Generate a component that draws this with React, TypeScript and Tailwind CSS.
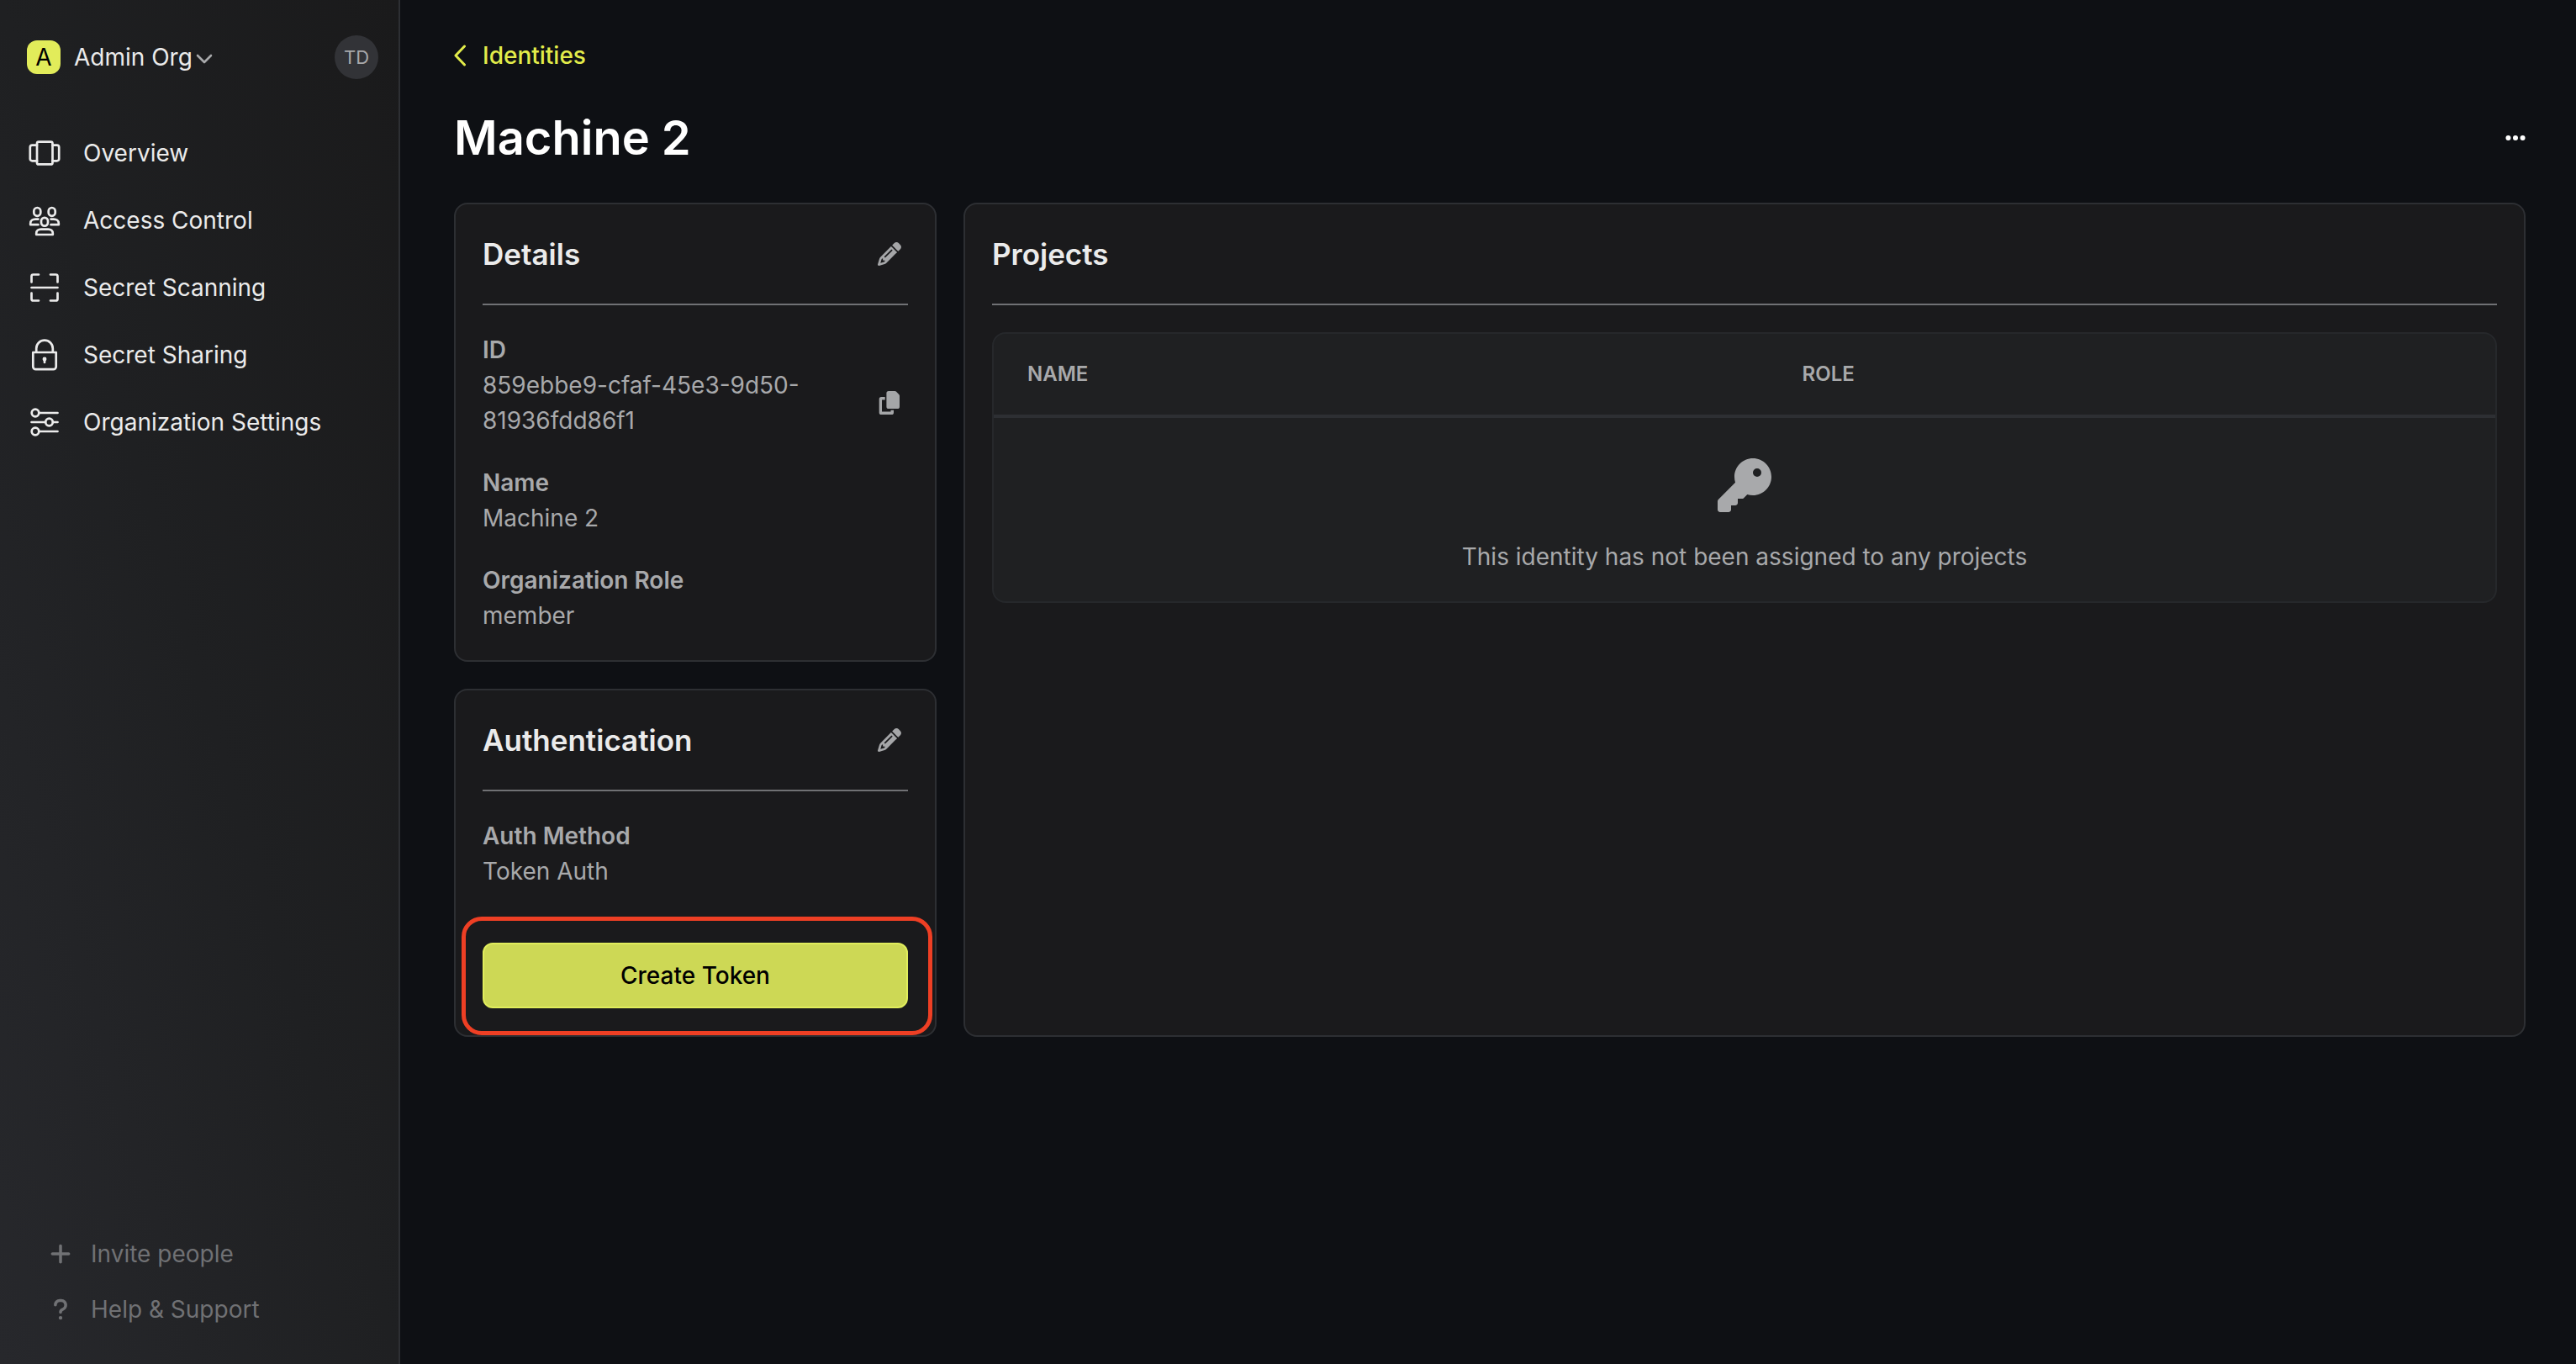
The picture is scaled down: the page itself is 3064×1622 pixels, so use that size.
import type { ReactNode } from "react";
import { FaEllipsis, FaKey, FaPencil, FaPlus, FaQuestion } from "react-icons/fa6";

type IconProps = { children: ReactNode };

function NavIcon({ children }: IconProps) {
  return (
    <svg viewBox="0 0 40 40" className="h-10 w-10 shrink-0" fill="none" stroke="currentColor" strokeWidth="2.7" strokeLinecap="round" strokeLinejoin="round" aria-hidden="true">
      {children}
    </svg>
  );
}

const navItems = [
  {
    label: "Overview",
    icon: (
      <NavIcon>
        <rect x="12" y="6.6" width="18.5" height="26.8" rx="2" />
        <path d="M12 10.6H6.300a2.500 2.500 0 0 0-2.500 2.500v13.800a2.500 2.500 0 0 0 2.500 2.500H12M30.500 10.600h5.200a2.500 2.500 0 0 1 2.500 2.500v13.800a2.500 2.500 0 0 1-2.500 2.500h-5.200" />
      </NavIcon>
    ),
  },
  {
    label: "Access Control",
    icon: (
      <NavIcon>
        <rect x="8.300" y="5" width="8" height="9.800" rx="4" />
        <rect x="25.700" y="5" width="8" height="9.800" rx="4" />
        <rect x="17" y="16.800" width="8" height="9.800" rx="4" />
        <path d="M13.500 18.600h-3.300c-3.200 0-6 1.800-6 4.800v1.800h9.300M28.500 18.600h3.300c3.200 0 6 1.800 6 4.800v1.800h-9.300M11.200 37v-1.600c0-3 2.500-4.800 5.500-4.800h8.600c3 0 5.500 1.800 5.500 4.800V37z" />
      </NavIcon>
    ),
  },
  {
    label: "Secret Scanning",
    icon: (
      <NavIcon>
        <path d="M5.500 13.500V6.500a2 2 0 0 1 2-2H14M28 4.500h6.500a2 2 0 0 1 2 2v7M36.500 26.500v7a2 2 0 0 1-2 2H28M14 35.500H7.500a2 2 0 0 1-2-2v-7M5.500 20h31" />
      </NavIcon>
    ),
  },
  {
    label: "Secret Sharing",
    icon: (
      <NavIcon>
        <path d="M7.300 17h27.400v17a3.200 3.200 0 0 1-3.200 3.200h-21A3.200 3.200 0 0 1 7.300 34zM11.200 17v-4.500a9.800 9.800 0 0 1 19.600 0V17" />
        <circle cx="21" cy="25" r="1.100" />
        <path d="M21 25v4" />
      </NavIcon>
    ),
  },
  {
    label: "Organization Settings",
    icon: (
      <NavIcon>
        <circle cx="10" cy="9" r="4.300" />
        <circle cx="26.500" cy="20" r="4.300" />
        <circle cx="10" cy="31" r="4.300" />
        <path d="M14.500 9h22M5.500 20h16.500M31 20h5.500M14.500 31h22" />
      </NavIcon>
    ),
  },
];

function CopyIcon() {
  return (
    <svg viewBox="0 0 28 28" className="h-7 w-7" fill="currentColor" aria-hidden="true">
      <path d="M13 0h7.300c.7 0 1.300.3 1.800.8l3.100 3.100c.5.500.8 1.100.8 1.800v12.700a2.600 2.600 0 0 1-2.600 2.600H13a2.600 2.600 0 0 1-2.600-2.600V2.600A2.600 2.600 0 0 1 13 0z" />
      <path d="M4.300 7h4.400v3.500H5v14h10.500v-1.700H19v2.600a2.600 2.600 0 0 1-2.600 2.600H4.300a2.600 2.600 0 0 1-2.600-2.600V9.600A2.600 2.600 0 0 1 4.300 7z" />
    </svg>
  );
}

function Card({ title, action, children }: { title: string; action?: string; children: ReactNode }) {
  return (
    <section className="rounded-2xl border-2 border-[#2d2f33] bg-[#1a1a1c] p-8">
      <header className="flex items-center justify-between border-b-2 border-[#707174] pb-8">
        <h2 className="text-[35px] leading-[54px] font-semibold text-[#ebebeb]">{title}</h2>
        {action && (
          <button type="button" aria-label={action} className="px-2 text-[28px] text-[#a5a6a8]">
            <FaPencil />
          </button>
        )}
      </header>
      {children}
    </section>
  );
}

function Field({ label, value, children }: { label: string; value: string; children?: ReactNode }) {
  return (
    <div>
      <dt className="font-semibold">{label}</dt>
      <dd className="flex items-center justify-between">
        <span>{value}</span>
        {children}
      </dd>
    </div>
  );
}

export default function App() {
  return (
    <div className="flex min-h-screen bg-[#0e1014] font-['Inter',sans-serif] text-[28px] leading-[42px] text-[#a8a9ab]">
      <aside className="flex w-[476px] shrink-0 flex-col border-r-2 border-[#2d2f33] bg-linear-to-tr from-[#27282c] via-[#1f2022] to-[#1a1a1b]">
        <div className="flex items-center justify-between pt-[42px] pr-6 pl-8">
          <button type="button" className="flex items-center text-[#ebebeb]">
            <span className="flex h-10 w-10 items-center justify-center rounded-xl bg-[#e2ec5a] text-black">A</span>
            <span className="pl-4">Admin Org</span>
            <svg viewBox="0 0 20 12" className="mt-1 ml-1 h-3 w-5 text-[#a8a9ab]" fill="none" stroke="currentColor" strokeWidth="2.600" strokeLinecap="round" strokeLinejoin="round" aria-hidden="true">
              <path d="M2 2l8 8 8-8" />
            </svg>
          </button>
          <button type="button" aria-label="Account" className="flex h-[52px] w-[52px] items-center justify-center rounded-full bg-[#323337] text-[22px] text-[#a8a9ab]">
            TD
          </button>
        </div>
        <nav className="flex flex-col pt-12 pl-8">
          {navItems.map((item) => (
            <a key={item.label} href="#" className="flex h-20 items-center gap-[27px] text-[#ebebeb]">
              {item.icon}
              {item.label}
            </a>
          ))}
        </nav>
        <div className="mt-auto flex flex-col items-start gap-6 pb-11 pl-[58px] text-[#707174]">
          <button type="button" className="flex items-center gap-[22px]">
            <FaPlus className="w-7" />
            Invite people
          </button>
          <button type="button" className="flex items-center gap-[22px]">
            <FaQuestion className="w-7" />
            Help &amp; Support
          </button>
        </div>
      </aside>

      <main className="min-w-0 flex-1 pt-[45px] pr-[60px] pl-16">
        <a href="#" className="flex w-fit items-center gap-5 font-medium text-[#e2ec4a]">
          <svg viewBox="0 0 14 26" className="h-[26px] w-3.5" fill="none" stroke="currentColor" strokeWidth="3" strokeLinecap="round" strokeLinejoin="round" aria-hidden="true">
            <path d="M12.500 2L2 13l10.500 11" />
          </svg>
          Identities
        </a>
        <div className="flex items-center justify-between pt-8 pb-8">
          <h1 className="text-[56px] leading-[90px] font-semibold text-white">Machine 2</h1>
          <button type="button" aria-label="More options" className="text-[28px] text-white">
            <FaEllipsis className="w-6" />
          </button>
        </div>

        <div className="flex gap-8">
          <div className="flex w-[574px] shrink-0 flex-col gap-8">
            <Card title="Details" action="Edit details">
              <dl className="flex flex-col gap-8 pt-8">
                <Field label="ID" value="859ebbe9-cfaf-45e3-9d50-81936fdd86f1">
                  <button type="button" aria-label="Copy ID" className="pr-2 pl-10 text-[#a5a6a8]">
                    <CopyIcon />
                  </button>
                </Field>
                <Field label="Name" value="Machine 2" />
                <Field label="Organization Role" value="member" />
              </dl>
            </Card>
            <Card title="Authentication" action="Edit authentication">
              <dl className="pt-8">
                <Field label="Auth Method" value="Token Auth" />
              </dl>
              <div className="relative mt-16">
                <button type="button" className="block w-full rounded-xl border-2 border-[#e0ed5c] bg-[#cdd855] py-4 font-medium text-black">
                  Create Token
                </button>
                <div className="pointer-events-none absolute -top-[31px] -right-[29px] -bottom-8 -left-[25px] rounded-3xl border-[5px] border-[#ee3f24]" />
              </div>
            </Card>
          </div>

          <div className="grid min-w-0 flex-1">
            <Card title="Projects">
              <div className="mt-8 overflow-hidden rounded-2xl border-2 border-[#26282b] bg-[#1f2022]">
                <table className="w-full table-fixed text-left">
                  <thead>
                    <tr className="h-[98px] border-b-4 border-[#2d2f33] text-2xl">
                      <th className="w-[51.6%] px-10 font-semibold">NAME</th>
                      <th className="px-10 font-semibold">ROLE</th>
                    </tr>
                  </thead>
                  <tbody>
                    <tr>
                      <td colSpan={2} className="pt-12 pb-8 text-center">
                        <FaKey className="mx-auto mb-8 text-[64px]" />
                        This identity has not been assigned to any projects
                      </td>
                    </tr>
                  </tbody>
                </table>
              </div>
            </Card>
          </div>
        </div>
      </main>
    </div>
  );
}
